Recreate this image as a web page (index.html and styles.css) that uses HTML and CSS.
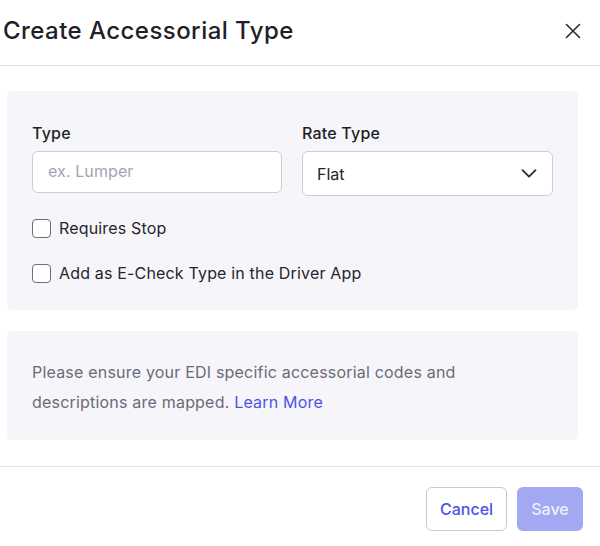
FILE: index.html
```html
<!DOCTYPE html>
<html lang="en">
<head>
<meta charset="utf-8">
<title>Create Accessorial Type</title>
<link rel="stylesheet" href="styles.css">
</head>
<body>
<div class="modal">
  <header class="modal-header">
    <h1 class="modal-title">Create Accessorial Type</h1>
    <button class="close-btn" aria-label="Close">
      <svg width="16" height="16" viewBox="0 0 16 16" fill="none" stroke="#2a2c33" stroke-width="1.6" stroke-linecap="round">
        <path d="M1.5 1.5L14.5 14.5M14.5 1.5L1.5 14.5"/>
      </svg>
    </button>
  </header>

  <div class="modal-body">
    <section class="panel form-panel">
      <div class="fields">
        <div class="field">
          <label class="field-label">Type</label>
          <div class="text-input placeholder">ex. Lumper</div>
        </div>
        <div class="field">
          <label class="field-label">Rate Type</label>
          <div class="select-input">
            <span>Flat</span>
            <svg width="16" height="9" viewBox="0 0 16 9" fill="none" stroke="#2a2c33" stroke-width="1.8" stroke-linecap="round" stroke-linejoin="round">
              <path d="M1.5 1.2L8 7.6L14.5 1.2"/>
            </svg>
          </div>
        </div>
      </div>
      <label class="check-row"><span class="checkbox"></span><span>Requires Stop</span></label>
      <label class="check-row second"><span class="checkbox"></span><span>Add as E-Check Type in the Driver App</span></label>
    </section>

    <section class="panel info-panel">
      <p class="info-text">Please ensure your EDI specific accessorial codes and descriptions are mapped. <a class="link" href="#">Learn More</a></p>
    </section>
  </div>

  <footer class="modal-footer">
    <button class="btn btn-cancel">Cancel</button>
    <button class="btn btn-save">Save</button>
  </footer>
</div>
</body>
</html>
```

FILE: styles.css
```css
* { box-sizing: border-box; }

html, body {
  margin: 0;
  padding: 0;
  background: #ffffff;
}

body {
  font-family: Inter, "Noto Sans", "Liberation Sans", sans-serif;
  color: #22242c;
}

.modal {
  width: 600px;
}

.modal-header {
  height: 66px;
  padding: 16px 19px 0 3px;
  border-bottom: 1px solid #e3e3e8;
  display: flex;
  justify-content: space-between;
  align-items: flex-start;
}

.modal-title {
  margin: 0;
  font-size: 24px;
  line-height: 30px;
  font-weight: 500;
  color: #1f2128;
  letter-spacing: 0.45px;
}

.close-btn {
  margin-top: 7px;
  width: 16px;
  height: 16px;
  padding: 0;
  border: 0;
  background: none;
  display: flex;
}

.modal-body {
  padding: 25px 22px 26px 7px;
}

.panel {
  background: #f6f6fa;
  border-radius: 5px;
}

.form-panel {
  padding: 32px 25px 25px 25px;
}

.fields {
  display: grid;
  grid-template-columns: 250px 251px;
  column-gap: 20px;
  align-items: start;
}

.field {
  display: flex;
  flex-direction: column;
  gap: 8px;
}

.field-label {
  font-size: 16px;
  line-height: 20px;
  font-weight: 500;
  color: #1e1f27;
  letter-spacing: 0.2px;
}

.text-input {
  height: 42px;
  background: #fff;
  border: 1px solid #cdcdd6;
  border-radius: 6px;
  padding: 0 15px 2px 15px;
  display: flex;
  align-items: center;
  font-size: 16px;
  letter-spacing: 0.1px;
}

.placeholder {
  color: #a3a4b1;
}

.select-input {
  height: 45px;
  background: #fff;
  border: 1px solid #cdcdd6;
  border-radius: 6px;
  padding: 0 15px 0 14px;
  display: flex;
  align-items: center;
  justify-content: space-between;
  font-size: 16px;
  color: #22242c;
}

.check-row {
  margin-top: 20px;
  height: 24px;
  display: flex;
  align-items: center;
  gap: 8px;
  font-size: 16px;
  line-height: 24px;
  color: #25262e;
  letter-spacing: 0.17px;
}

.check-row.second {
  margin-top: 21px;
}

.checkbox {
  width: 19px;
  height: 19px;
  border: 1.5px solid #6e6f7a;
  border-radius: 4px;
  background: #fff;
  flex: none;
}

.info-panel {
  margin-top: 21px;
  padding: 26px 25px 23px 25px;
}

.info-text {
  margin: 0;
  max-width: 440px;
  font-size: 16px;
  line-height: 30px;
  color: #6a6b78;
  letter-spacing: 0.2px;
}

.link {
  color: #4a53e6;
  text-decoration: none;
}

.modal-footer {
  border-top: 1px solid #e3e3e8;
  padding: 20px 17px 0 0;
  display: flex;
  justify-content: flex-end;
  gap: 10px;
}

.btn {
  height: 44px;
  border-radius: 6px;
  font-family: inherit;
  font-size: 16px;
  font-weight: 500;
  padding: 0 13px;
}

.btn-cancel {
  width: 81px;
  background: #fff;
  border: 1px solid #c9c9d2;
  color: #4a53e6;
}

.btn-save {
  width: 66px;
  background: #a3a8f3;
  border: 0;
  color: #eff0fd;
}
```
